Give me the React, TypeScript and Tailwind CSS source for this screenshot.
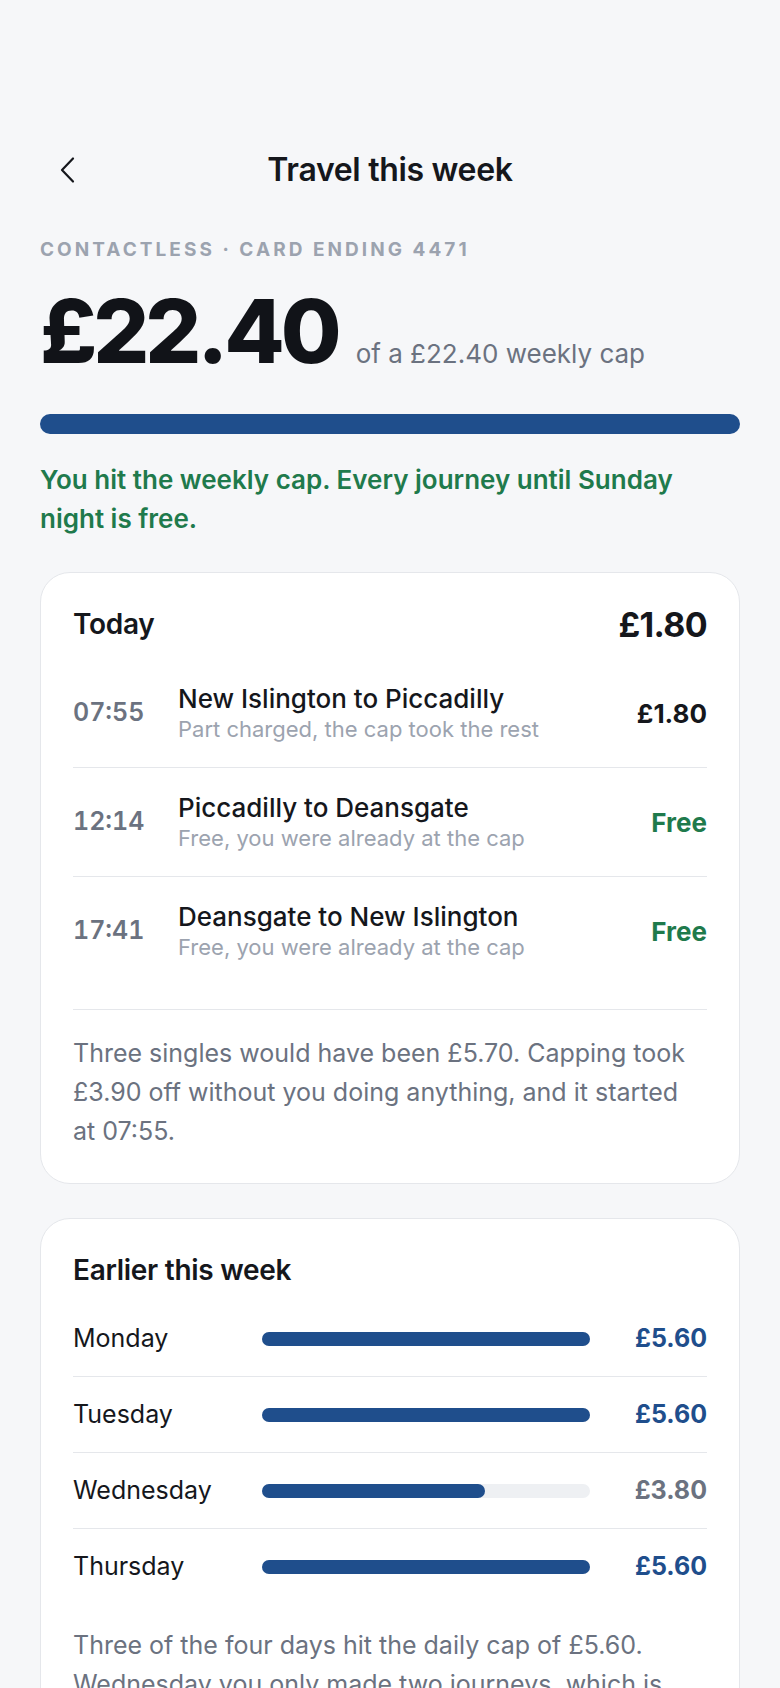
const TODAY = [
  { time: "07:55", route: "New Islington to Piccadilly", note: "Part charged, the cap took the rest", price: "£1.80", free: false },
  { time: "12:14", route: "Piccadilly to Deansgate", note: "Free, you were already at the cap", price: "Free", free: true },
  { time: "17:41", route: "Deansgate to New Islington", note: "Free, you were already at the cap", price: "Free", free: true },
];

const DAYS = [
  { day: "Monday", amount: 5.6 },
  { day: "Tuesday", amount: 5.6 },
  { day: "Wednesday", amount: 3.8 },
  { day: "Thursday", amount: 5.6 },
];

const DAILY_CAP = 5.6;

function BackChevron() {
  return (
    <svg width="18" height="28" viewBox="0 0 18 28" fill="none" aria-hidden>
      <path d="M14 2.5 3 14l11 11.5" stroke="#15171c" strokeWidth="2.2" strokeLinecap="round" strokeLinejoin="round" />
    </svg>
  );
}

export default function App() {
  return (
    <div className="min-h-screen bg-[#f6f7f9] px-10 pb-16 pt-[146px] font-['Inter','Noto_Sans',sans-serif] text-[#15171c]">
      <header className="grid h-12 grid-cols-[1fr_auto_1fr] items-center">
        <button className="ml-[19px] flex items-center justify-self-start">
          <BackChevron />
        </button>
        <h1 className="text-[32px] font-semibold tracking-[-0.01em]">Travel this week</h1>
        <span />
      </header>

      <p className="mt-[42px] text-[19px] font-bold uppercase leading-7 tracking-[0.16em] text-[#9ca3af]">
        Contactless · Card ending 4471
      </p>

      <div className="mt-[23px] flex items-baseline gap-[18px]">
        <span className="text-[88px] font-extrabold leading-none tracking-[-0.046em] text-[#111318]">£22.40</span>
        <span className="text-[26px] text-[#6b7280]">of a £22.40 weekly cap</span>
      </div>

      <div className="mt-[39px] h-5 rounded-full bg-[#1f4e8c]" />

      <p className="mt-[26px] max-w-[660px] text-[26px] font-semibold leading-[39px] text-[#1f7a4c]">
        You hit the weekly cap. Every journey until Sunday night is free.
      </p>

      <section className="mt-[34px] rounded-[30px] border border-[#e5e7eb] bg-white p-8">
        <div className="mb-4 flex h-[38px] items-center justify-between">
          <h2 className="text-[28px] font-semibold tracking-[-0.01em]">Today</h2>
          <span className="text-[34px] font-bold tracking-[-0.02em]">£1.80</span>
        </div>
        <div className="divide-y divide-[#e5e7eb]">
          {TODAY.map((j) => (
            <div key={j.time} className="grid grid-cols-[105px_1fr_auto] items-center py-6">
              <span className="text-[25px] font-semibold tabular-nums text-[#6b7280]">{j.time}</span>
              <div>
                <div className="text-[26px] font-medium leading-8">{j.route}</div>
                <div className="text-[22px] leading-7 text-[#9ca3af]">{j.note}</div>
              </div>
              <span className={"text-[26px] font-bold " + (j.free ? "text-[#1f7a4c]" : "text-[#15171c]")}>
                {j.price}
              </span>
            </div>
          ))}
        </div>
        <p className="mt-6 border-t border-[#e5e7eb] pt-6 text-[25px] leading-[39px] text-[#6b7280]">
          Three singles would have been £5.70. Capping took £3.90 off without you doing anything, and it started at 07:55.
        </p>
      </section>

      <section className="mt-[34px] rounded-[30px] border border-[#e5e7eb] bg-white p-8">
        <h2 className="mb-3 flex h-[38px] items-center text-[28px] font-semibold tracking-[-0.01em]">
          Earlier this week
        </h2>
        <div className="divide-y divide-[#e5e7eb]">
          {DAYS.map((d) => {
            const capped = d.amount >= DAILY_CAP;
            return (
              <div
                key={d.day}
                className="grid grid-cols-[189px_1fr_117px] items-center py-[21px] text-[25px] leading-[33px]"
              >
                <span>{d.day}</span>
                <div className="h-[14px] rounded-full bg-[#eef0f3]">
                  <div
                    className="h-full rounded-full bg-[#1f4e8c]"
                    style={{ width: `${(d.amount / DAILY_CAP) * 100}%` }}
                  />
                </div>
                <span className={"text-right font-bold " + (capped ? "text-[#1f4e8c]" : "text-[#6b7280]")}>
                  £{d.amount.toFixed(2)}
                </span>
              </div>
            );
          })}
        </div>
        <p className="mt-[22px] text-[25px] leading-[39px] text-[#6b7280]">
          Three of the four days hit the daily cap of £5.60. Wednesday you only made two journeys, which is
          why it came in under the cap at £3.80.
        </p>
      </section>
    </div>
  );
}
